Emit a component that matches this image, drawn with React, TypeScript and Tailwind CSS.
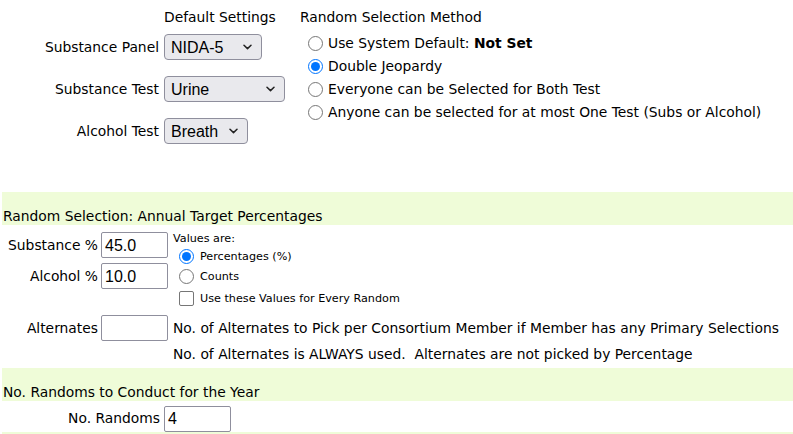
import React from "react";

function Chevron() {
  return (
    <svg width="9" height="6" viewBox="0 0 9 6" className="shrink-0">
      <path d="M1 1.2 L4.5 4.6 L8 1.2" fill="none" stroke="#222" strokeWidth="1.5" strokeLinecap="round" strokeLinejoin="round" />
    </svg>
  );
}

function Sel({ value, w }: { value: string; w: string }) {
  return (
    <div
      className={`${w} h-[26px] flex items-center justify-between pl-[6px] pr-[9px] border border-[#8f8f9d] rounded-[4px] bg-[#e9e9ed] text-[16px] font-['Liberation_Sans',Arial,sans-serif] text-black`}
    >
      <span>{value}</span>
      <Chevron />
    </div>
  );
}

function TInput({ value }: { value: string }) {
  return (
    <div className="w-[67px] h-[26px] flex items-center pl-[3px] border border-[#8f8f9d] rounded-[2px] bg-white text-[16px] font-['Liberation_Sans',Arial,sans-serif] text-black">
      {value}
    </div>
  );
}

function Radio({ checked }: { checked?: boolean }) {
  return checked ? (
    <span className="w-[15px] h-[15px] rounded-full border-[1.5px] border-[#0075ff] flex items-center justify-center shrink-0 bg-white">
      <span className="w-[9px] h-[9px] rounded-full bg-[#0075ff]" />
    </span>
  ) : (
    <span className="w-[15px] h-[15px] rounded-full border border-[#767676] bg-white shrink-0" />
  );
}

export default function App() {
  return (
    <div className="w-[793px] h-[434px] overflow-hidden bg-white text-black font-['DejaVu_Sans',Verdana,sans-serif] text-[13.85px] leading-[17px]">
      {/* Top section */}
      <div className="flex pt-[9px] h-[192px]">
        <div className="grid grid-cols-[159px_auto] gap-x-[5px] items-center content-start">
          <div />
          <div className="h-[17px]">Default Settings</div>
          <div className="text-right mt-[8px]">Substance Panel</div>
          <div className="mt-[8px]">
            <Sel value="NIDA-5" w="w-[98px]" />
          </div>
          <div className="text-right mt-[16px]">Substance Test</div>
          <div className="mt-[16px]">
            <Sel value="Urine" w="w-[121px]" />
          </div>
          <div className="text-right mt-[16px]">Alcohol Test</div>
          <div className="mt-[16px]">
            <Sel value="Breath" w="w-[84px]" />
          </div>
        </div>
        <div className="ml-[15px] flex flex-col">
          <div className="h-[17px]">Random Selection Method</div>
          <div className="mt-[6px] pl-[8px] flex flex-col">
            <div className="h-[23px] flex items-center gap-[5px]">
              <Radio />
              <span>
                Use System Default: <b>Not Set</b>
              </span>
            </div>
            <div className="h-[23px] flex items-center gap-[5px]">
              <Radio checked />
              <span>Double Jeopardy</span>
            </div>
            <div className="h-[23px] flex items-center gap-[5px]">
              <Radio />
              <span>Everyone can be Selected for Both Test</span>
            </div>
            <div className="h-[23px] flex items-center gap-[5px]">
              <Radio />
              <span>Anyone can be selected for at most One Test (Subs or Alcohol)</span>
            </div>
          </div>
        </div>
      </div>

      {/* Band 1 */}
      <div className="ml-[2px] h-[33px] bg-[#effcd8] flex items-end pl-[1px]">
        Random Selection: Annual Target Percentages
      </div>

      {/* Section 2 */}
      <div className="h-[143px] pt-[7px]">
        <div className="flex">
          <div className="grid grid-cols-[98px_auto] gap-x-[3px] gap-y-[5px] items-center content-start">
            <div className="text-right">Substance %</div>
            <TInput value="45.0" />
            <div className="text-right">Alcohol %</div>
            <TInput value="10.0" />
          </div>
          <div className="ml-[5px] flex flex-col text-[11.2px] leading-[13px]">
            <div className="h-[13px]">Values are:</div>
            <div className="pl-[6px] mt-[1px] flex flex-col">
              <div className="h-[20px] flex items-center gap-[6px]">
                <Radio checked />
                <span>Percentages (%)</span>
              </div>
              <div className="h-[20px] flex items-center gap-[6px]">
                <Radio />
                <span>Counts</span>
              </div>
              <div className="h-[20px] mt-[2px] flex items-center gap-[6px]">
                <span className="w-[15px] h-[15px] border border-[#767676] rounded-[2px] bg-white shrink-0" />
                <span>Use these Values for Every Random</span>
              </div>
            </div>
          </div>
        </div>
        <div className="flex items-center mt-[7px]">
          <div className="w-[98px] text-right">Alternates</div>
          <div className="ml-[3px]">
            <TInput value="" />
          </div>
          <div className="ml-[5px] whitespace-nowrap">No. of Alternates to Pick per Consortium Member if Member has any Primary Selections</div>
        </div>
        <div className="pl-[173px] mt-[5px] whitespace-pre">No. of Alternates is ALWAYS used.  Alternates are not picked by Percentage</div>
      </div>

      {/* Band 2 */}
      <div className="ml-[2px] h-[33px] bg-[#effcd8] flex items-end pl-[1px]">
        No. Randoms to Conduct for the Year
      </div>

      {/* Section 3 */}
      <div className="flex items-center pt-[4px] h-[31px]">
        <div className="w-[160px] text-right">No. Randoms</div>
        <div className="ml-[4px]">
          <TInput value="4" />
        </div>
      </div>
      <div className="ml-[2px] h-[20px] bg-[#effcd8]" />
    </div>
  );
}
